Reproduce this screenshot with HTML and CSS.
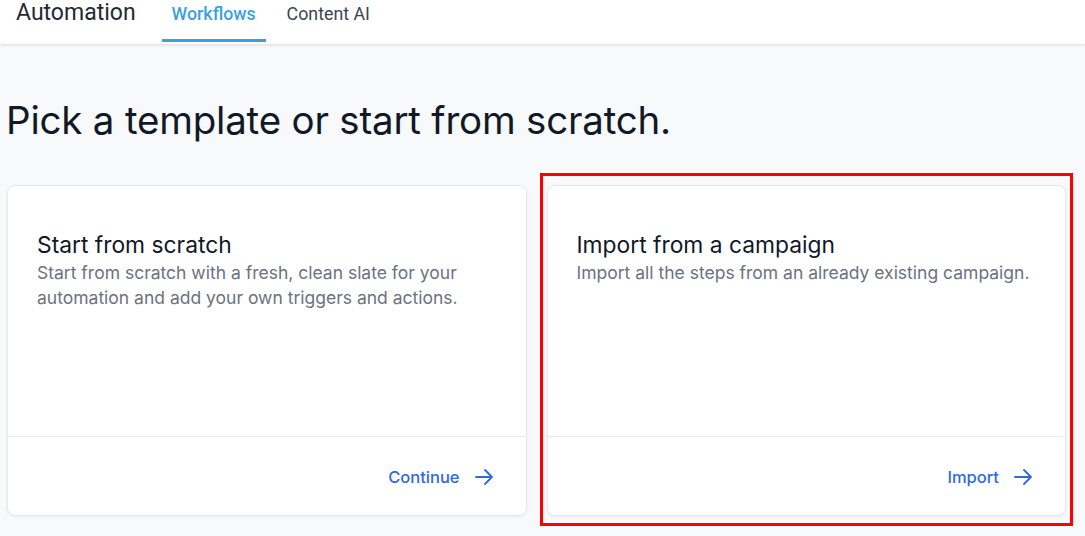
FILE: index.html
```html
<!DOCTYPE html>
<html lang="en">
<head>
<meta charset="utf-8">
<title>Automation - Workflows</title>
<link rel="stylesheet" href="styles.css">
</head>
<body>
<header class="topbar">
  <div class="brand">Automation</div>
  <nav class="tabs">
    <a class="tab active">Workflows</a>
    <a class="tab">Content AI</a>
  </nav>
</header>
<main class="main">
  <h1 class="page-title">Pick a template or start from scratch.</h1>
  <div class="cards">
    <section class="card">
      <div class="card-body">
        <h2 class="card-title">Start from scratch</h2>
        <p class="card-desc">Start from scratch with a fresh, clean slate for your automation and add your own triggers and actions.</p>
      </div>
      <div class="card-footer">
        <a class="card-action">Continue
          <svg class="arrow" width="20" height="20" viewBox="0 0 20 20" fill="none" stroke="currentColor" stroke-width="1.8" stroke-linecap="round" stroke-linejoin="round"><path d="M2 10h16M11 3l7 7-7 7"/></svg>
        </a>
      </div>
    </section>
    <section class="card highlighted">
      <div class="card-body">
        <h2 class="card-title">Import from a campaign</h2>
        <p class="card-desc">Import all the steps from an already existing campaign.</p>
      </div>
      <div class="card-footer">
        <a class="card-action">Import
          <svg class="arrow" width="20" height="20" viewBox="0 0 20 20" fill="none" stroke="currentColor" stroke-width="1.8" stroke-linecap="round" stroke-linejoin="round"><path d="M2 10h16M11 3l7 7-7 7"/></svg>
        </a>
      </div>
      <div class="highlight-box"></div>
    </section>
  </div>
</main>
</body>
</html>
```

FILE: styles.css
```css
* { box-sizing: border-box; }
html, body { margin: 0; padding: 0; }
body {
  background: #f8f9fb;
  font-family: Inter, "Noto Sans", sans-serif;
  width: 1085px;
  height: 536px;
  overflow: hidden;
}
.topbar {
  height: 44px;
  background: #fff;
  display: flex;
  align-items: flex-start;
  box-shadow: 0 1px 3px rgba(0,0,0,0.12);
  position: relative;
  z-index: 1;
}
.brand {
  font-family: Roboto, sans-serif;
  font-size: 23px;
  color: #1f2937;
  padding-left: 16px;
  margin-top: -2px;
  line-height: 30px;
}
.tabs {
  display: flex;
  margin-left: 26px;
  height: 44px;
  gap: 11px;
}
.tab {
  font-family: Roboto, sans-serif;
  font-size: 17.8px;
  color: #3b4452;
  padding: 0 10px;
  height: 42px;
  line-height: 28px;
  border-bottom: 3px solid transparent;
}
.tab.active {
  color: #3c9fde;
  font-weight: 500;
  border-bottom-color: #3c9fde;
}
.main {
  padding: 0 19px 0 7px;
}
.page-title {
  margin: 52px 0 0 -1px;
  font-size: 38.5px;
  font-weight: 400;
  color: #111827;
  line-height: 48px;
  letter-spacing: -0.2px;
}
.cards {
  margin-top: 41px;
  display: grid;
  grid-template-columns: 1fr 1fr;
  gap: 20px;
}
.card {
  position: relative;
  background: #fff;
  border: 1px solid #e6e8eb;
  border-radius: 8px;
  box-shadow: 0 1px 3px rgba(0,0,0,0.06);
  height: 331px;
  display: flex;
  flex-direction: column;
}
.card-body {
  flex: 1;
  padding: 44px 20px 0 29px;
}
.card-title {
  margin: 0;
  font-size: 22.8px;
  font-weight: 400;
  color: #111827;
  line-height: 30px;
}
.card-desc {
  margin: 0;
  font-size: 17.5px;
  color: #6b7280;
  line-height: 25px;
}
.card-footer {
  height: 79px;
  border-top: 1px solid #e8eaed;
  display: flex;
  align-items: center;
  justify-content: flex-end;
  padding: 2px 32px 0 0;
}
.card-action {
  display: flex;
  align-items: center;
  gap: 14px;
  color: #2f6ae0;
  font-size: 16.5px;
  font-weight: 500;
}
.arrow { display: block; }
.highlight-box {
  position: absolute;
  left: -8px;
  top: -13px;
  right: -8px;
  bottom: -11px;
  border: 3px solid #ff0000;
  pointer-events: none;
}
```
